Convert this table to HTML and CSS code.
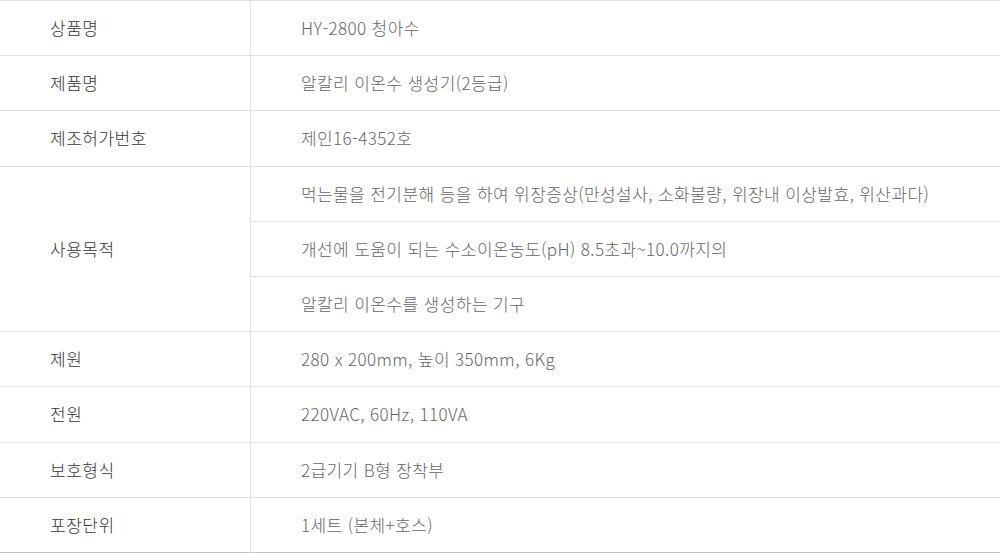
FILE: index.html
```html
<!DOCTYPE html>
<html lang="ko">
<head>
<meta charset="utf-8">
<link rel="stylesheet" href="styles.css">
</head>
<body>
<table class="spec">
  <tbody>
    <tr><th>상품명</th><td>HY-2800 청아수</td></tr>
    <tr><th>제품명</th><td>알칼리 이온수 생성기(2등급)</td></tr>
    <tr><th>제조허가번호</th><td>제인16-4352호</td></tr>
    <tr><th rowspan="3">사용목적</th><td>먹는물을 전기분해 등을 하여 위장증상(만성설사, 소화불량, 위장내 이상발효, 위산과다)</td></tr>
    <tr><td>개선에 도움이 되는 수소이온농도(pH) 8.5초과~10.0까지의</td></tr>
    <tr><td>알칼리 이온수를 생성하는 기구</td></tr>
    <tr><th>제원</th><td>280 x 200mm, 높이 350mm, 6Kg</td></tr>
    <tr><th>전원</th><td>220VAC, 60Hz, 110VA</td></tr>
    <tr><th>보호형식</th><td>2급기기 B형 장착부</td></tr>
    <tr><th>포장단위</th><td>1세트 (본체+호스)</td></tr>
  </tbody>
</table>
</body>
</html>
```
FILE: styles.css
```css
html, body {
  margin: 0;
  padding: 0;
  background: #fff;
}
.spec {
  width: 1000px;
  border-collapse: collapse;
  border-top: 1px solid #c4c4c4;
  border-bottom: 1px solid #c4c4c4;
  font-family: "Noto Sans CJK KR", "Noto Sans", sans-serif;
  font-size: 17px;
}
.spec th,
.spec td {
  height: 54.2px;
  padding: 0 0 0 50px;
  text-align: left;
  vertical-align: middle;
  border-top: 1px solid #e3e3e3;
  line-height: 22px;
  font-weight: 300;
}
.spec th {
  width: 200px;
  color: #333;
  letter-spacing: 0.5px;
  border-right: 1px solid #e3e3e3;
}
.spec td {
  color: #666;
  letter-spacing: 0.4px;
}
```
